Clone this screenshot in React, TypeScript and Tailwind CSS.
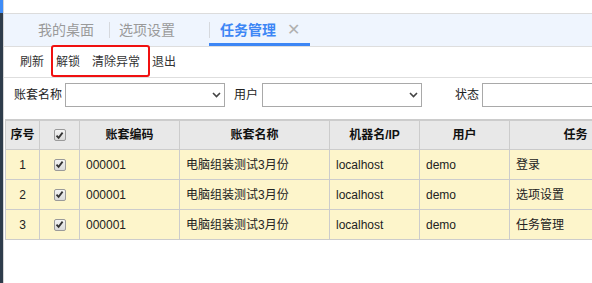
const font = { fontFamily: '"Liberation Sans", "Noto Sans CJK SC", sans-serif' };

const rows = [
  { no: 1, code: "000001", name: "电脑组装测试3月份", host: "localhost", user: "demo", task: "登录" },
  { no: 2, code: "000001", name: "电脑组装测试3月份", host: "localhost", user: "demo", task: "选项设置" },
  { no: 3, code: "000001", name: "电脑组装测试3月份", host: "localhost", user: "demo", task: "任务管理" },
];

const CheckBox = () => (
  <span className="flex h-[12px] w-[12px] items-center justify-center rounded-[2px] border border-[#9a9a9a] bg-gradient-to-b from-[#f4f4f4] to-[#d9d9d9]">
    <svg width="9" height="9" viewBox="0 0 9 9">
      <path d="M1.5 4.6 L3.6 6.8 L7.6 1.6" fill="none" stroke="#333" strokeWidth="1.8" />
    </svg>
  </span>
);

const Chevron = () => (
  <svg width="9" height="6" viewBox="0 0 9 6" className="mr-[3px]">
    <path d="M1 1 L4.5 4.5 L8 1" fill="none" stroke="#444" strokeWidth="1.6" />
  </svg>
);

const cell = "border-r border-b border-[#cccccc] flex items-center";

export default function App() {
  return (
    <div className="flex h-[283px] w-[592px] overflow-hidden bg-white text-[12px]" style={font}>
      <div className="flex w-[3px] shrink-0 flex-col">
        <div className="h-[13px] bg-[#3f8cf7]" />
        <div className="flex-1 bg-[#2e3c4b]" />
      </div>
      <div className="relative flex min-w-0 flex-1 flex-col border-l border-[#d4d4d4]">
        <div className="h-[14px] border-b border-[#dcdcdc] bg-white" />

        <div className="flex h-[33px] shrink-0 border-b border-[#dedede] bg-[#eff5fe] text-[14px]">
          <div className="flex w-[105px] shrink-0 items-center pl-[34px] text-[#9a9a9a]">我的桌面</div>
          <div className="h-[16px] w-px shrink-0 self-center bg-[#d6d9de]" />
          <div className="flex w-[99px] shrink-0 items-center pl-[9px] text-[#9a9a9a]">选项设置</div>
          <div className="h-[16px] w-px shrink-0 self-center bg-[#d6d9de]" />
          <div className="relative flex w-[100px] shrink-0 items-center pl-[10px] font-bold text-[#3d86f5]">
            任务管理
            <span className="ml-[11px] text-[16px] font-normal text-[#b0b0b0]">✕</span>
            <div className="absolute bottom-0 left-[-1px] right-0 h-[3px] bg-[#3d86f5]" />
          </div>
        </div>

        <div className="flex h-[31px] shrink-0 items-center gap-[12px] border-b border-[#dedede] pl-[16px] text-[#333]">
          <span>刷新</span>
          <span>解锁</span>
          <span>清除异常</span>
          <span>退出</span>
        </div>
        <div className="absolute left-[47px] top-[45px] h-[32px] w-[99px] rounded-[3px] border-2 border-[#f01010]" />

        <div className="flex items-center pl-[10px] pt-[5px] text-[#222]">
          <span className="shrink-0">账套名称</span>
          <div className="ml-[3px] flex h-[24px] w-[160px] shrink-0 items-center justify-end border border-[#a9a9a9]">
            <Chevron />
          </div>
          <span className="ml-[9px] shrink-0">用户</span>
          <div className="ml-[4px] flex h-[24px] w-[160px] shrink-0 items-center justify-end border border-[#a9a9a9]">
            <Chevron />
          </div>
          <span className="ml-[33px] shrink-0">状态</span>
          <div className="ml-[3px] h-[24px] w-[140px] shrink-0 border border-[#a9a9a9]" />
        </div>

        <div className="ml-[1px] mt-[12px] w-[640px] shrink-0 border-l border-t-2 border-[#cccccc]">
          <div className="grid h-[29px] grid-cols-[34px_40px_100px_150px_90px_90px_132px] bg-[#e8e8e8] font-bold text-[#111]">
            <div className={`${cell} justify-center`}>序号</div>
            <div className={`${cell} justify-center`}><CheckBox /></div>
            <div className={`${cell} justify-center`}>账套编码</div>
            <div className={`${cell} justify-center`}>账套名称</div>
            <div className={`${cell} justify-center`}>机器名/IP</div>
            <div className={`${cell} justify-center`}>用户</div>
            <div className={`${cell} justify-center`}>任务</div>
          </div>
          {rows.map((r) => (
            <div key={r.no} className="grid h-[30px] grid-cols-[34px_40px_100px_150px_90px_90px_132px] bg-[#fdf5cb] text-[#222]">
              <div className={`${cell} justify-center`}>{r.no}</div>
              <div className={`${cell} justify-center`}><CheckBox /></div>
              <div className={`${cell} pl-[6px]`}>{r.code}</div>
              <div className={`${cell} pl-[6px]`}>{r.name}</div>
              <div className={`${cell} pl-[6px]`}>{r.host}</div>
              <div className={`${cell} pl-[6px]`}>{r.user}</div>
              <div className={`${cell} pl-[6px]`}>{r.task}</div>
            </div>
          ))}
        </div>
      </div>
    </div>
  );
}
